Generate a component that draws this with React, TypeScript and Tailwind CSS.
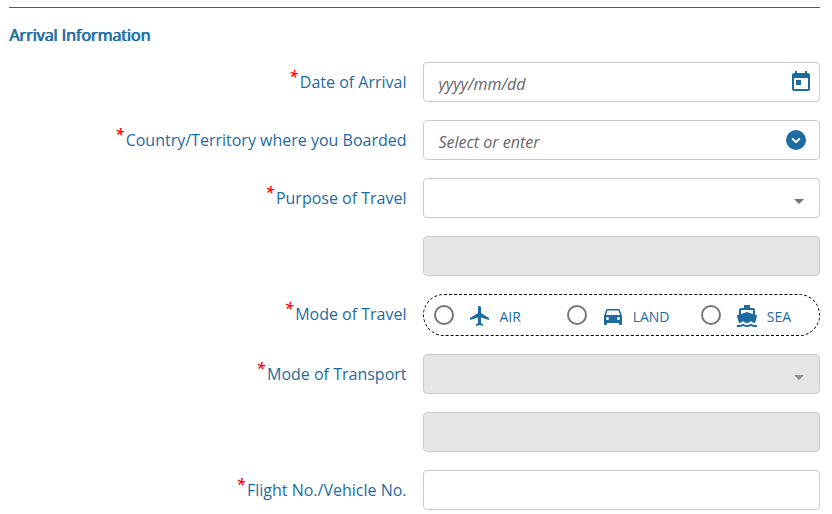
import type { ReactNode } from "react";
import { MdDirectionsBoat, MdDirectionsCar, MdFlight, MdToday } from "react-icons/md";

const fieldClass =
  "block w-full h-10 px-[15px] pt-1 rounded border border-[#ccc] bg-white text-base text-[#333] outline-none placeholder:italic placeholder:text-[#666] placeholder:opacity-100 disabled:bg-[#e5e5e5]";

const travelModes = [
  { value: "air", label: "AIR", Icon: MdFlight },
  { value: "land", label: "LAND", Icon: MdDirectionsCar },
  { value: "sea", label: "SEA", Icon: MdDirectionsBoat },
];

const Label = ({ id, htmlFor, children }: { id?: string; htmlFor?: string; children: ReactNode }) => (
  <label id={id} htmlFor={htmlFor} className="flex justify-end gap-[2px] py-2 text-base leading-6 text-[#1c6ca1]">
    <span className="-mt-[6px] italic font-semibold text-[red]">*</span>
    {children}
  </label>
);

const SelectField = ({ id, disabled }: { id: string; disabled?: boolean }) => (
  <div className="relative">
    <select id={id} disabled={disabled} className={`${fieldClass} appearance-none`}>
      <option value=""></option>
    </select>
    <svg
      viewBox="0 0 10 5"
      className={`absolute right-4 top-[21px] w-[10px] h-[5px] pointer-events-none ${disabled ? "text-[#8f8f8f]" : "text-[#757575]"}`}
    >
      <path d="M0 0h10L5 5z" fill="currentColor" />
    </svg>
  </div>
);

const App = () => {
  return (
    <main className="pl-[9px] pr-3 pt-[7px] pb-1 bg-white font-['Open_Sans',sans-serif]">
      <hr className="border-[#1c6ca1]" />
      <h2 className="mt-[15px] mb-[15px] text-base leading-6 font-normal text-[#1c6ca1] [text-shadow:1px_0_0_currentColor]">
        Arrival Information
      </h2>

      <form className="space-y-[18px]">
        <div className="grid grid-cols-2 gap-4 items-start">
          <Label htmlFor="arrival-date">Date of Arrival</Label>
          <div className="relative">
            <input id="arrival-date" type="text" placeholder="yyyy/mm/dd" className={fieldClass} />
            <button type="button" aria-label="Open calendar" className="absolute right-[7px] top-2 text-[#1c6ca1]">
              <MdToday className="size-6" />
            </button>
          </div>
        </div>

        <div className="grid grid-cols-2 gap-4 items-start">
          <Label htmlFor="boarded">Country/Territory where you Boarded</Label>
          <div className="relative">
            <input id="boarded" type="text" placeholder="Select or enter" className={fieldClass} />
            <button type="button" aria-label="Show countries" className="absolute right-[14px] top-[10px] text-[#1c6ca1]">
              <svg viewBox="0 0 20 20" className="size-5">
                <circle cx="10" cy="10" r="10" fill="currentColor" />
                <path d="M6.2 8.6l3.8 3.6 3.8-3.6" fill="none" stroke="white" strokeWidth="2" />
              </svg>
            </button>
          </div>
        </div>

        <div className="grid grid-cols-2 gap-4 items-start">
          <Label htmlFor="purpose">Purpose of Travel</Label>
          <SelectField id="purpose" />
        </div>

        <div className="grid grid-cols-2 gap-4 items-start">
          <input type="text" disabled aria-label="Other purpose of travel" className={`${fieldClass} col-start-2`} />
        </div>

        <div className="grid grid-cols-2 gap-4 items-start">
          <Label id="travel-mode">Mode of Travel</Label>
          <div
            role="radiogroup"
            aria-labelledby="travel-mode"
            className="grid grid-cols-[133fr_134fr_118fr] h-[42px] pl-[10px] rounded-full border border-dashed border-black"
          >
            {travelModes.map(({ value, label, Icon }) => (
              <label key={value} className="flex items-center text-sm text-[#1c6ca1]">
                <input
                  type="radio"
                  name="travelMode"
                  value={value}
                  className="size-5 appearance-none rounded-full border-2 border-[#757575] checked:border-[6px] checked:border-[#1c6ca1]"
                />
                <Icon className="size-6 ml-[14px] mt-[2px]" />
                <span className="ml-2 mt-1">{label}</span>
              </label>
            ))}
          </div>
        </div>

        <div className="grid grid-cols-2 gap-4 items-start">
          <Label htmlFor="transport">Mode of Transport</Label>
          <SelectField id="transport" disabled />
        </div>

        <div className="grid grid-cols-2 gap-4 items-start">
          <input type="text" disabled aria-label="Other mode of transport" className={`${fieldClass} col-start-2`} />
        </div>

        <div className="grid grid-cols-2 gap-4 items-start">
          <Label htmlFor="flight-no">Flight No./Vehicle No.</Label>
          <input id="flight-no" type="text" className={fieldClass} />
        </div>
      </form>
    </main>
  );
};

export default App;
